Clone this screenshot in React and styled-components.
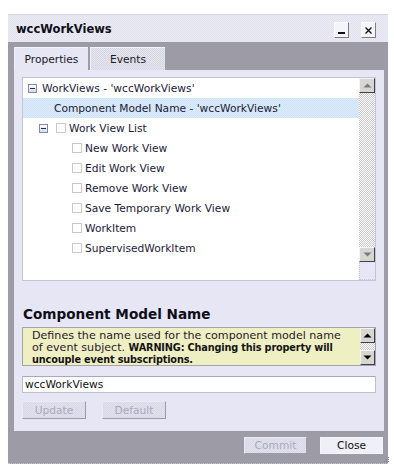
import React from 'react';
import styled, { createGlobalStyle, css } from 'styled-components';

const Global = createGlobalStyle`
  html, body { margin: 0; padding: 0; background: #ffffff; }
  body { font-family: "DejaVu Sans", Verdana, sans-serif; }
  * { box-sizing: border-box; }
`;

const dither = (a, b) => css`
  background-color: ${a};
  background-image: repeating-conic-gradient(${a} 0 25%, ${b} 0 50%);
  background-size: 2px 2px;
`;

const Dialog = styled.div`
  position: relative;
  margin: 14px 0 0 8px;
  width: 380px;
  background: #9d9ca6;
  border-bottom: 1px dotted #c4c4cc;
`;

const TitleBar = styled.div`
  height: 28px;
  display: flex;
  align-items: center;
  justify-content: space-between;
  padding: 0 12px 0 8px;
  border-top: 1px solid #d4d4e0;
  ${dither('#e2e2ee', '#ececf6')}
`;

const Title = styled.span`
  font-size: 11.5px;
  font-weight: bold;
  color: #101018;
  margin-top: 1px;
`;

const WinButtons = styled.div`
  display: flex;
  gap: 12px;
  margin-top: 3px;
`;

const WinButton = styled.div`
  width: 15px;
  height: 16px;
  background: #f4f4fa;
  border: 1px solid;
  border-color: #fcfcff #7c7c88 #7c7c88 #fcfcff;
  display: flex;
  align-items: center;
  justify-content: center;
`;

const Body = styled.div`
  padding: 5px 4px 0 6px;
`;

const Tabs = styled.div`
  display: flex;
  gap: 2px;
  height: 23px;
`;

const Tab = styled.div`
  width: ${p => p.$w}px;
  display: flex;
  align-items: center;
  justify-content: center;
  font-size: 10.67px;
  color: #1a1a28;
  border-top: 1px solid #f4f4fc;
  border-left: 1px solid #f0f0f8;
  ${p => (p.$active ? css`background: #e6e6f4;` : dither('#d6d6e2', '#e6e6f0'))}
`;

const Panel = styled.div`
  background: #e6e6f4;
  padding: 7px 8px 12px 8px;
  display: flex;
  flex-direction: column;
`;

const TreeBox = styled.div`
  height: 204px;
  display: flex;
  background: #ffffff;
  border: 1px solid #c4c4d4;
`;

const TreeList = styled.div`
  flex: 1;
  display: flex;
  flex-direction: column;
`;

const Row = styled.div`
  height: 20px;
  display: flex;
  align-items: center;
  padding-left: ${p => p.$indent}px;
  font-size: 10.67px;
  color: #1c1a38;
  white-space: nowrap;
  ${p => p.$selected && dither('#cfe3f6', '#dcecfa')}
`;

const Expander = styled.span`
  width: 9px;
  height: 9px;
  border: 1px solid #7d8ca4;
  background: linear-gradient(#ffffff, #d4dbe8);
  display: flex;
  align-items: center;
  justify-content: center;
  margin-right: ${p => p.$gap}px;
  &::after {
    content: '';
    width: 5px;
    height: 1px;
    background: #1e2e5a;
  }
`;

const Check = styled.span`
  width: 10px;
  height: 10px;
  border: 1px solid #c8c8d0;
  background: #ffffff;
  margin-right: 3px;
`;

const VScroll = styled.div`
  width: ${p => p.$w}px;
  display: flex;
  flex-direction: column;
`;

const ScrollBtn = styled.div`
  height: ${p => p.$h}px;
  background: #d8d6d0;
  border: 1px solid;
  border-color: #f4f4f4 #404048 #404048 #f4f4f4;
  display: flex;
  align-items: center;
  justify-content: center;
`;

const Track = styled.div`
  flex: ${p => (p.$fixed ? 'none' : '1')};
  height: ${p => (p.$fixed ? `${p.$fixed}px` : 'auto')};
  ${dither('#c8c8cc', '#ffffff')}
`;

const Corner = styled.div`
  height: 18px;
  background: #e6e6f4;
  border-left: 1px dotted #c8c8d4;
  border-bottom: 1px dotted #c8c8d4;
`;

const Heading = styled.h2`
  margin: 25px 0 5px 1px;
  font-size: 13.6px;
  line-height: 16px;
  font-weight: bold;
  color: #0e0e18;
`;

const DescBox = styled.div`
  height: 39px;
  display: flex;
  background: #efefc4;
  border: 1px solid #a4a4ac;
  overflow: hidden;
`;

const DescText = styled.div`
  flex: 1;
  padding: 2px 4px 0 9px;
  font-size: 11.1px;
  line-height: 12px;
  color: #2a1a2a;
  white-space: nowrap;
  b {
    color: #141414;
    font-family: "DejaVu Sans Condensed", "DejaVu Sans", Verdana, sans-serif;
    font-size: 10.8px;
    letter-spacing: -0.15px;
  }
`;

const Field = styled.input`
  margin-top: 10px;
  height: 17px;
  width: 100%;
  border: 1px solid #c0c0cc;
  border-top-color: #a8a8b8;
  background: #ffffff;
  padding: 0 2px;
  font-family: "DejaVu Sans", Verdana, sans-serif;
  font-size: 10.67px;
  color: #101010;
  outline: none;
`;

const ButtonRow = styled.div`
  display: flex;
  gap: 16px;
  margin-top: 8px;
`;

const Btn = styled.button`
  width: ${p => p.$w}px;
  height: ${p => p.$h}px;
  padding: 0;
  font-family: "DejaVu Sans", Verdana, sans-serif;
  font-size: 10.67px;
  color: ${p => (p.disabled ? '#aaaabc' : '#101010')};
  border: 1px solid;
  border-color: ${p => (p.disabled ? '#eaeaf2 #9c9cac #9c9cac #eaeaf2' : '#f4f4fc')};
  ${p => (p.disabled ? dither('#d8d8e6', '#e2e2ee') : css`background: #efeff8;`)}
`;

const Footer = styled.div`
  height: 32px;
  display: flex;
  justify-content: flex-end;
  align-items: flex-start;
  gap: 13px;
  padding: 6px 1px 0 0;
`;

const Grip = styled.svg`
  position: absolute;
  right: -2px;
  bottom: -2px;
`;

const Tri = ({ up, color }) => (
  <svg width="9" height="5" viewBox="0 0 9 5">
    <polygon points={up ? '0.5,4.5 4.5,0.5 8.5,4.5' : '0.5,0.5 8.5,0.5 4.5,4.5'} fill={color} />
  </svg>
);

const tree = [
  { label: "WorkViews - 'wccWorkViews'", indent: 5, exp: true, gap: 5 },
  { label: "Component Model Name - 'wccWorkViews'", indent: 31, selected: true },
  { label: 'Work View List', indent: 16, exp: true, gap: 8, check: true },
  { label: 'New Work View', indent: 49, check: true },
  { label: 'Edit Work View', indent: 49, check: true },
  { label: 'Remove Work View', indent: 49, check: true },
  { label: 'Save Temporary Work View', indent: 49, check: true },
  { label: 'WorkItem', indent: 49, check: true },
  { label: 'SupervisedWorkItem', indent: 49, check: true },
];

export default function App() {
  return (
    <>
      <Global />
      <Dialog>
        <TitleBar>
          <Title>wccWorkViews</Title>
          <WinButtons>
            <WinButton>
              <svg width="9" height="10" viewBox="0 0 9 10">
                <rect x="1" y="7" width="7" height="2" fill="#101010" />
              </svg>
            </WinButton>
            <WinButton>
              <svg width="9" height="9" viewBox="0 0 9 9">
                <path d="M1.5 1.5 L7.5 7.5 M7.5 1.5 L1.5 7.5" stroke="#101010" strokeWidth="1.3" />
              </svg>
            </WinButton>
          </WinButtons>
        </TitleBar>
        <Body>
          <Tabs>
            <Tab $active $w={74}>Properties</Tab>
            <Tab $w={75}>Events</Tab>
          </Tabs>
          <Panel>
            <TreeBox>
              <TreeList>
                {tree.map((r) => (
                  <Row key={r.label} $indent={r.indent} $selected={r.selected}>
                    {r.exp && <Expander $gap={r.gap} />}
                    {r.check && <Check />}
                    {r.label}
                  </Row>
                ))}
              </TreeList>
              <VScroll $w={16}>
                <ScrollBtn $h={15}><Tri up color="#7a7890" /></ScrollBtn>
                <Track />
                <ScrollBtn $h={15}><Tri color="#7a7890" /></ScrollBtn>
                <Corner />
              </VScroll>
            </TreeBox>
            <Heading>Component Model Name</Heading>
            <DescBox>
              <DescText>
                Defines the name used for the component model name<br />
                of event subject. <b>WARNING: Changing this property will</b><br />
                <b>uncouple event subscriptions.</b>
              </DescText>
              <VScroll $w={15}>
                <ScrollBtn $h={15}><Tri up color="#000000" /></ScrollBtn>
                <Track $fixed={7} />
                <ScrollBtn $h={15}><Tri color="#000000" /></ScrollBtn>
              </VScroll>
            </DescBox>
            <Field value="wccWorkViews" readOnly />
            <ButtonRow>
              <Btn disabled $w={64} $h={18}>Update</Btn>
              <Btn disabled $w={64} $h={18}>Default</Btn>
            </ButtonRow>
          </Panel>
          <Footer>
            <Btn disabled $w={63} $h={17}>Commit</Btn>
            <Btn $w={63} $h={17}>Close</Btn>
          </Footer>
        </Body>
        <Grip width="8" height="8" viewBox="0 0 8 8">
          <rect x="6" y="0" width="1" height="1" fill="#80808a" />
          <rect x="4" y="2" width="1" height="1" fill="#80808a" />
          <rect x="6" y="2" width="1" height="1" fill="#80808a" />
          <rect x="2" y="4" width="1" height="1" fill="#80808a" />
          <rect x="4" y="4" width="1" height="1" fill="#80808a" />
          <rect x="6" y="4" width="1" height="1" fill="#80808a" />
        </Grip>
      </Dialog>
    </>
  );
}
